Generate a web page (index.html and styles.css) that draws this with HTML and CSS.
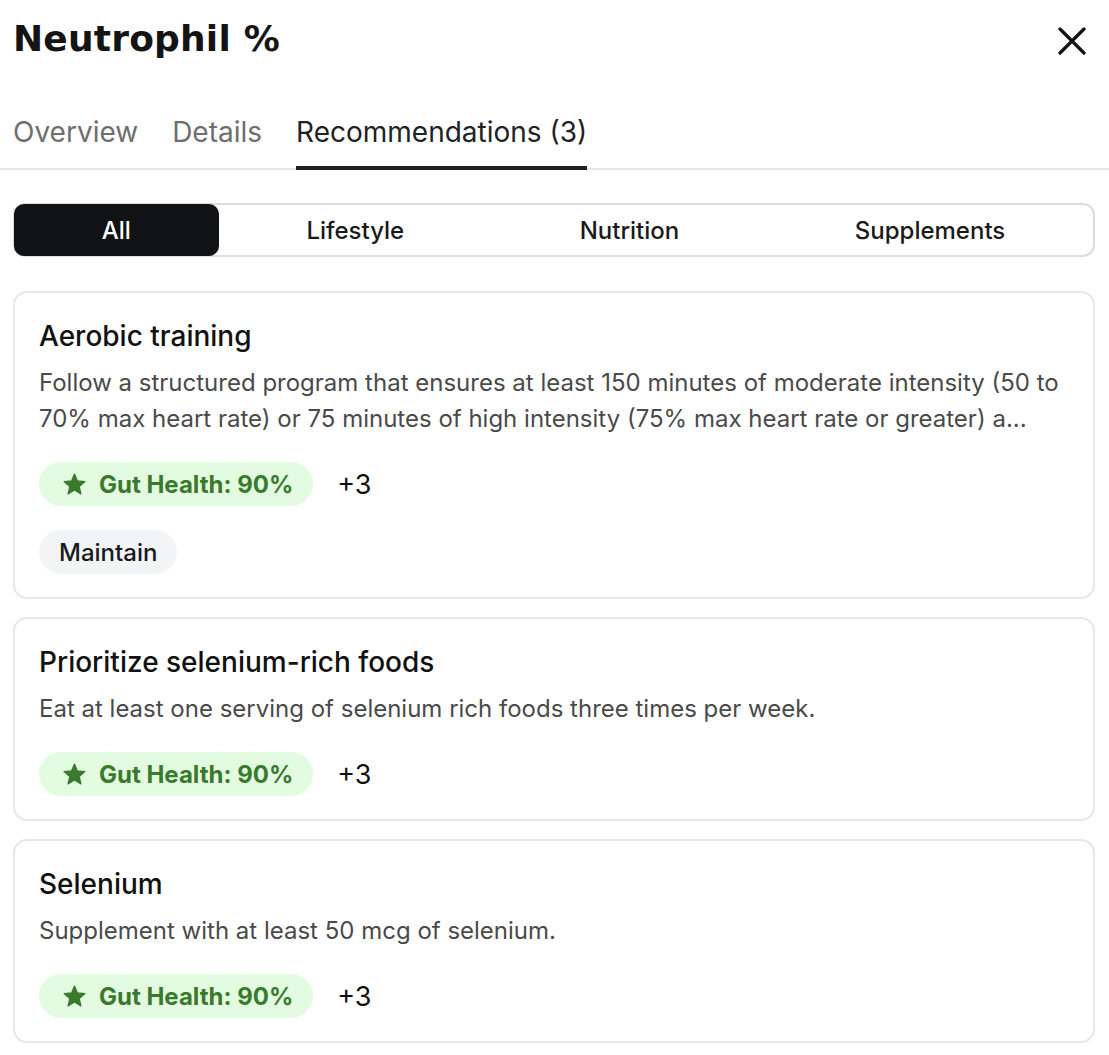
FILE: index.html
```html
<!DOCTYPE html>
<html lang="en">
<head>
<meta charset="utf-8">
<title>Neutrophil %</title>
<link rel="stylesheet" href="styles.css">
</head>
<body>
<div class="panel">
  <header class="head">
    <h1 class="title">Neutrophil %</h1>
    <button class="close" aria-label="Close">
      <svg viewBox="0 0 28 28" width="28" height="28"><path d="M2 2L26 26M26 2L2 26" stroke="#111" stroke-width="3.2" stroke-linecap="round" fill="none"/></svg>
    </button>
  </header>
  <nav class="tabs">
    <span class="tab">Overview</span>
    <span class="tab">Details</span>
    <span class="tab active">Recommendations (3)</span>
  </nav>
  <div class="segmented">
    <span class="seg active">All</span>
    <span class="seg">Lifestyle</span>
    <span class="seg">Nutrition</span>
    <span class="seg">Supplements</span>
  </div>
  <div class="cards">
    <section class="card">
      <h2 class="card-title">Aerobic training</h2>
      <p class="card-desc">Follow a structured program that ensures at least 150 minutes of moderate intensity (50 to 70% max heart rate) or 75 minutes of high intensity (75% max heart rate or greater) a...</p>
      <div class="badges">
        <span class="badge"><svg class="star" viewBox="0 0 24 24"><path d="M12 17.27L18.18 21l-1.64-7.03L22 9.24l-7.19-.61L12 2 9.19 8.63 2 9.24l5.46 4.73L5.82 21z"/></svg>Gut Health: 90%</span>
        <span class="more">+3</span>
      </div>
      <span class="tag">Maintain</span>
    </section>
    <section class="card">
      <h2 class="card-title">Prioritize selenium-rich foods</h2>
      <p class="card-desc">Eat at least one serving of selenium rich foods three times per week.</p>
      <div class="badges">
        <span class="badge"><svg class="star" viewBox="0 0 24 24"><path d="M12 17.27L18.18 21l-1.64-7.03L22 9.24l-7.19-.61L12 2 9.19 8.63 2 9.24l5.46 4.73L5.82 21z"/></svg>Gut Health: 90%</span>
        <span class="more">+3</span>
      </div>
    </section>
    <section class="card">
      <h2 class="card-title">Selenium</h2>
      <p class="card-desc">Supplement with at least 50 mcg of selenium.</p>
      <div class="badges">
        <span class="badge"><svg class="star" viewBox="0 0 24 24"><path d="M12 17.27L18.18 21l-1.64-7.03L22 9.24l-7.19-.61L12 2 9.19 8.63 2 9.24l5.46 4.73L5.82 21z"/></svg>Gut Health: 90%</span>
        <span class="more">+3</span>
      </div>
    </section>
  </div>
</div>
</body>
</html>
```
FILE: styles.css
```css
* { box-sizing: border-box; }
html, body { margin: 0; padding: 0; background: #fff; }
body { font-family: Inter, "Noto Sans", sans-serif; color: #111; }

.panel { padding: 17px 14px 0 13px; }

.head { display: flex; justify-content: space-between; align-items: flex-start; }
.title {
  margin: 0;
  font-family: "DejaVu Sans", sans-serif;
  font-weight: 700;
  font-size: 36px;
  line-height: 44px;
  color: #141414;
  letter-spacing: 0.2px;
}
.close {
  border: 0; background: none; padding: 0;
  width: 28px; height: 28px;
  margin: 10px 9px 0 0;
  display: flex;
}

.tabs {
  display: flex;
  gap: 34px;
  margin-top: 55px;
  border-bottom: 2px solid #e6e6e6;
  margin-right: -14px;
  margin-left: -13px;
  padding-left: 13px;
}
.tab {
  font-size: 28px;
  line-height: 32px;
  color: #6e6e6e;
  padding-bottom: 18px;
  border-bottom: 4px solid transparent;
  margin-bottom: -2px;
}
.tab.active { color: #1f2226; border-bottom-color: #1f2226; }

.segmented {
  display: flex;
  margin-top: 33px;
  border: 2px solid #dcdcdc;
  border-radius: 12px;
  height: 54px;
}
.seg {
  flex: 1 1 auto;
  display: flex;
  align-items: center;
  justify-content: center;
  font-size: 24px;
  font-weight: 500;
  color: #1a1a1a;
  border-radius: 10px;
  margin: -1px 0;
}
.seg.active { background: #111215; color: #fff; margin-left: -1px; }

.cards { display: flex; flex-direction: column; gap: 18px; margin-top: 34px; }
.card {
  border: 2px solid #e7e7e7;
  border-radius: 14px;
  padding: 24px 24px 23px 24px;
}
.card-title {
  margin: 0;
  font-size: 28px;
  font-weight: 500;
  line-height: 39px;
  color: #111;
}
.card-desc {
  margin: 9px 0 0;
  font-size: 24px;
  line-height: 36px;
  color: #4a4a4a;
}
.badges { display: flex; align-items: center; margin-top: 25px; }
.badge {
  display: inline-flex;
  align-items: center;
  gap: 12px;
  height: 44px;
  padding: 0 20px 0 23px;
  border-radius: 22px;
  background: #e3fbe0;
  color: #3a7a2c;
  font-size: 24px;
  font-weight: 700;
}
.star { width: 25px; height: 25px; fill: #3a7a2d; stroke: #3a7a2d; stroke-width: 1.2; stroke-linejoin: round; }
.more { margin-left: 24px; font-size: 27px; color: #111; }
.tag {
  display: inline-flex;
  align-items: center;
  height: 44px;
  margin-top: 24px;
  padding: 0 20px;
  border-radius: 22px;
  background: #f2f4f6;
  color: #161a20;
  font-size: 24px;
  font-weight: 500;
}
```
